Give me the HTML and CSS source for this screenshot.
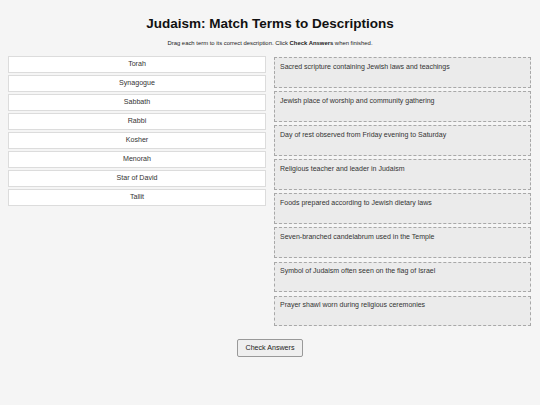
FILE: index.html
```html
<!DOCTYPE html>
<html>
<head>
<meta charset="utf-8">
<link rel="stylesheet" href="styles.css">
</head>
<body>
<div class="page">
  <h1 class="title">Judaism: Match Terms to Descriptions</h1>
  <p class="subtitle">Drag each term to its correct description. Click <b>Check Answers</b> when finished.</p>
  <div class="board">
    <div class="terms">
      <div class="term">Torah</div>
      <div class="term">Synagogue</div>
      <div class="term">Sabbath</div>
      <div class="term">Rabbi</div>
      <div class="term">Kosher</div>
      <div class="term">Menorah</div>
      <div class="term">Star of David</div>
      <div class="term">Tallit</div>
    </div>
    <div class="descs">
      <div class="desc">Sacred scripture containing Jewish laws and teachings</div>
      <div class="desc">Jewish place of worship and community gathering</div>
      <div class="desc">Day of rest observed from Friday evening to Saturday</div>
      <div class="desc">Religious teacher and leader in Judaism</div>
      <div class="desc">Foods prepared according to Jewish dietary laws</div>
      <div class="desc">Seven-branched candelabrum used in the Temple</div>
      <div class="desc">Symbol of Judaism often seen on the flag of Israel</div>
      <div class="desc">Prayer shawl worn during religious ceremonies</div>
    </div>
  </div>
  <div class="actions">
    <button class="check">Check Answers</button>
  </div>
</div>
</body>
</html>
```
FILE: styles.css
```css
html, body {
  margin: 0;
  padding: 0;
  background: #f5f5f5;
  font-family: "Liberation Sans", Arial, sans-serif;
  color: #222;
}
.page {
  padding: 15px 8px 0 8px;
}
.title {
  margin: 0;
  text-align: center;
  font-size: 13.5px;
  line-height: 18px;
  font-weight: bold;
  color: #111;
}
.subtitle {
  margin: 5.5px 0 0 0;
  text-align: center;
  font-size: 5.9px;
  line-height: 8px;
  color: #222;
}
.board {
  margin-top: 9.5px;
  display: flex;
  gap: 8px;
}
.terms {
  flex: 0 0 258px;
  display: flex;
  flex-direction: column;
  gap: 2px;
}
.term {
  height: 15px;
  line-height: 15px;
  background: #fff;
  border: 1px solid #dcdcdc;
  text-align: center;
  font-size: 7.1px;
  color: #333;
}
.descs {
  flex: 0 0 257px;
  display: flex;
  flex-direction: column;
  gap: 3.5px;
  margin-top: 1px;
}
.desc {
  box-sizing: content-box;
  background: #ebebeb;
  border: 1px dashed #a8a8a8;
  padding: 3.5px 5px 0 5px;
  height: 25.1px;
  font-size: 7px;
  line-height: 9px;
  color: #333;
}
.actions {
  display: flex;
  justify-content: center;
  margin-top: 12.5px;
}
.check {
  font-family: "Liberation Sans", Arial, sans-serif;
  font-size: 7.1px;
  height: 18px;
  padding: 0 8px;
  background: #efefef;
  border: 1px solid #999;
  border-radius: 2px;
  color: #222;
}
```
